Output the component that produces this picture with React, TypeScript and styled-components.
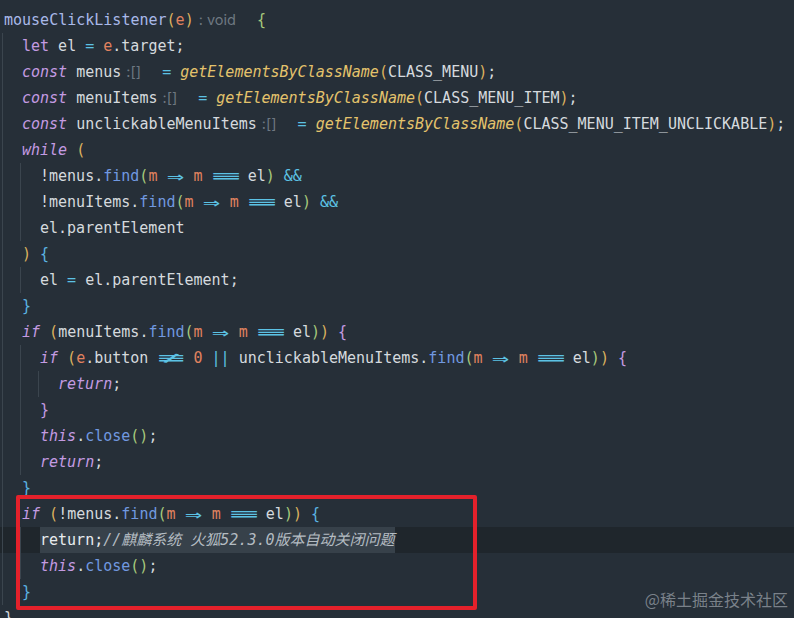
import React from "react";
import styled, { createGlobalStyle } from "styled-components";

const GlobalStyle = createGlobalStyle`
  html, body {
    margin: 0;
    padding: 0;
    background: #262f38;
  }
`;

type Kind =
  | "pl"
  | "name"
  | "kw"
  | "kwu"
  | "fn"
  | "mt"
  | "pa"
  | "op"
  | "nu"
  | "by"
  | "bg"
  | "bb"
  | "bp"
  | "cm"
  | "sel"
  | "hint"
  | "arrow"
  | "eq3"
  | "neq3";

type Tok = [Kind, string?];

interface CodeLine {
  level: number;
  toks: Tok[];
  current?: boolean;
}

const colors: Record<string, string> = {
  pl: "#d5dade",
  name: "#a9b9e9",
  kw: "#c49be2",
  kwu: "#c49be2",
  fn: "#e4c36c",
  mt: "#7199e0",
  pa: "#e0825f",
  op: "#5cc2e4",
  nu: "#e0825f",
  by: "#dcb25f",
  bg: "#a7c97c",
  bb: "#5bb4e2",
  bp: "#c49be2",
  cm: "#b4bcc2",
  sel: "#e8ecef",
};

const Editor = styled.div`
  position: relative;
  width: 794px;
  height: 618px;
  overflow: hidden;
  box-sizing: border-box;
  padding-top: 7px;
  background: #262f38;
  font-family: "DejaVu Sans Mono", "Noto Sans CJK SC", monospace;
  font-size: 15px;
  color: #d5dade;
`;

const guideImages = (level: number) =>
  Array.from({ length: level })
    .map(() => "linear-gradient(#3b454e, #3b454e)")
    .join(", ");

const guidePositions = (level: number) =>
  Array.from({ length: level })
    .map((_, i) => `${2 + i * 18}px 0`)
    .join(", ");

const Line = styled.div<{ $level: number; $current?: boolean }>`
  height: 26px;
  line-height: 26px;
  white-space: pre;
  padding-left: ${(p) => 4 + p.$level * 18}px;
  background-color: ${(p) => (p.$current ? "#1f262c" : "transparent")};
  background-image: ${(p) => (p.$level ? guideImages(p.$level) : "none")};
  background-position: ${(p) => guidePositions(p.$level)};
  background-size: 1px 100%;
  background-repeat: no-repeat;
`;

const Tk = styled.span<{ $kind: Kind }>`
  color: ${(p) => colors[p.$kind] || "#d5dade"};
  font-style: ${(p) =>
    p.$kind === "kw" || p.$kind === "fn" || p.$kind === "cm" ? "italic" : "normal"};
`;

const Selection = styled.span`
  background: #37414a;
  display: inline-block;
  height: 26px;
`;

const Hint = styled.span`
  display: inline-block;
  padding: 0 12px 0 5px;
  font-family: "Inter", "Noto Sans", sans-serif;
  font-size: 14.5px;
  color: #6e7881;
`;

const Lig = styled.span<{ $w: number }>`
  display: inline-block;
  width: ${(p) => p.$w}ch;
  text-align: center;
  color: #5cc2e4;
`;

const LigGlyph = styled.span<{ $sx: number; $sy?: number }>`
  display: inline-block;
  transform: scale(${(p) => p.$sx}, ${(p) => p.$sy || 1});
`;

const Highlight = styled.div`
  position: absolute;
  left: 16px;
  top: 495px;
  width: 461px;
  height: 115px;
  box-sizing: border-box;
  border: 4px solid #e4212b;
  border-radius: 2px;
`;

const Watermark = styled.div`
  position: absolute;
  right: 6px;
  bottom: 7px;
  font-family: "Noto Sans CJK SC", sans-serif;
  font-size: 16px;
  color: rgba(150, 158, 166, 0.75);
`;

const P = (s: string): Tok => ["pl", s];
const lambda: Tok[] = [["pa", "m"], P(" "), ["arrow"], P(" "), ["pa", "m"], P(" "), ["eq3"], P(" el")];

const lines: CodeLine[] = [
  { level: 0, toks: [["name", "mouseClickListener"], ["by", "("], ["pa", "e"], ["by", ")"], ["hint", ": void"], P(" "), ["bg", "{"]] },
  { level: 1, toks: [["kwu", "let"], P(" el "), ["op", "="], P(" "), ["pa", "e"], P(".target;")] },
  { level: 1, toks: [["kw", "const"], P(" menus"), ["hint", ":[]"], P(" "), ["op", "="], P(" "), ["fn", "getElementsByClassName"], ["by", "("], P("CLASS_MENU"), ["by", ")"], P(";")] },
  { level: 1, toks: [["kw", "const"], P(" menuItems"), ["hint", ":[]"], P(" "), ["op", "="], P(" "), ["fn", "getElementsByClassName"], ["by", "("], P("CLASS_MENU_ITEM"), ["by", ")"], P(";")] },
  { level: 1, toks: [["kw", "const"], P(" unclickableMenuItems"), ["hint", ":[]"], P(" "), ["op", "="], P(" "), ["fn", "getElementsByClassName"], ["by", "("], P("CLASS_MENU_ITEM_UNCLICKABLE"), ["by", ")"], P(";")] },
  { level: 1, toks: [["kw", "while"], P(" "), ["by", "("]] },
  { level: 2, toks: [P("!menus."), ["mt", "find"], ["bg", "("], ...lambda, ["bg", ")"], P(" "), ["op", "&&"]] },
  { level: 2, toks: [P("!menuItems."), ["mt", "find"], ["bg", "("], ...lambda, ["bg", ")"], P(" "), ["op", "&&"]] },
  { level: 2, toks: [P("el.parentElement")] },
  { level: 1, toks: [["by", ")"], P(" "), ["bb", "{"]] },
  { level: 2, toks: [P("el "), ["op", "="], P(" el.parentElement;")] },
  { level: 1, toks: [["bb", "}"]] },
  { level: 1, toks: [["kw", "if"], P(" "), ["by", "("], P("menuItems."), ["mt", "find"], ["bg", "("], ...lambda, ["bg", ")"], ["by", ")"], P(" "), ["bp", "{"]] },
  { level: 2, toks: [["kw", "if"], P(" "), ["by", "("], ["pa", "e"], P(".button "), ["neq3"], P(" "), ["nu", "0"], P(" "), ["op", "||"], P(" unclickableMenuItems."), ["mt", "find"], ["bg", "("], ...lambda, ["bg", ")"], ["by", ")"], P(" "), ["bp", "{"]] },
  { level: 3, toks: [["kw", "return"], P(";")] },
  { level: 2, toks: [["bp", "}"]] },
  { level: 2, toks: [["kw", "this"], P("."), ["mt", "close"], ["bg", "()"], P(";")] },
  { level: 2, toks: [["kw", "return"], P(";")] },
  { level: 1, toks: [["bb", "}"]] },
  { level: 1, toks: [["kw", "if"], P(" "), ["by", "("], P("!menus."), ["mt", "find"], ["bg", "("], ...lambda, ["bg", ")"], ["by", ")"], P(" "), ["bb", "{"]] },
  { level: 2, current: true, toks: [["sel", "return;"], ["cm", "//麒麟系统 火狐52.3.0版本自动关闭问题"]] },
  { level: 2, toks: [["kw", "this"], P("."), ["mt", "close"], ["bg", "()"], P(";")] },
  { level: 1, toks: [["bb", "}"]] },
  { level: 0, toks: [P("}")] },
];

const renderTok = (t: Tok, i: number) => {
  const [kind, text] = t;
  if (kind === "hint") return <Hint key={i}>{text}</Hint>;
  if (kind === "arrow")
    return (
      <Lig key={i} $w={2}>
        <LigGlyph $sx={1.9} $sy={1.3}>⇒</LigGlyph>
      </Lig>
    );
  if (kind === "eq3")
    return (
      <Lig key={i} $w={3}>
        <LigGlyph $sx={3.3}>≡</LigGlyph>
      </Lig>
    );
  if (kind === "neq3")
    return (
      <Lig key={i} $w={3}>
        <LigGlyph $sx={3.1}>≢</LigGlyph>
      </Lig>
    );
  return (
    <Tk key={i} $kind={kind}>
      {text}
    </Tk>
  );
};

const App: React.FC = () => {
  return (
    <>
      <GlobalStyle />
      <Editor>
        {lines.map((line, n) => (
          <Line key={n} $level={line.level} $current={line.current}>
            {line.current ? <Selection>{line.toks.map(renderTok)}</Selection> : line.toks.map(renderTok)}
          </Line>
        ))}
        <Highlight />
        <Watermark>@稀土掘金技术社区</Watermark>
      </Editor>
    </>
  );
};

export default App;
